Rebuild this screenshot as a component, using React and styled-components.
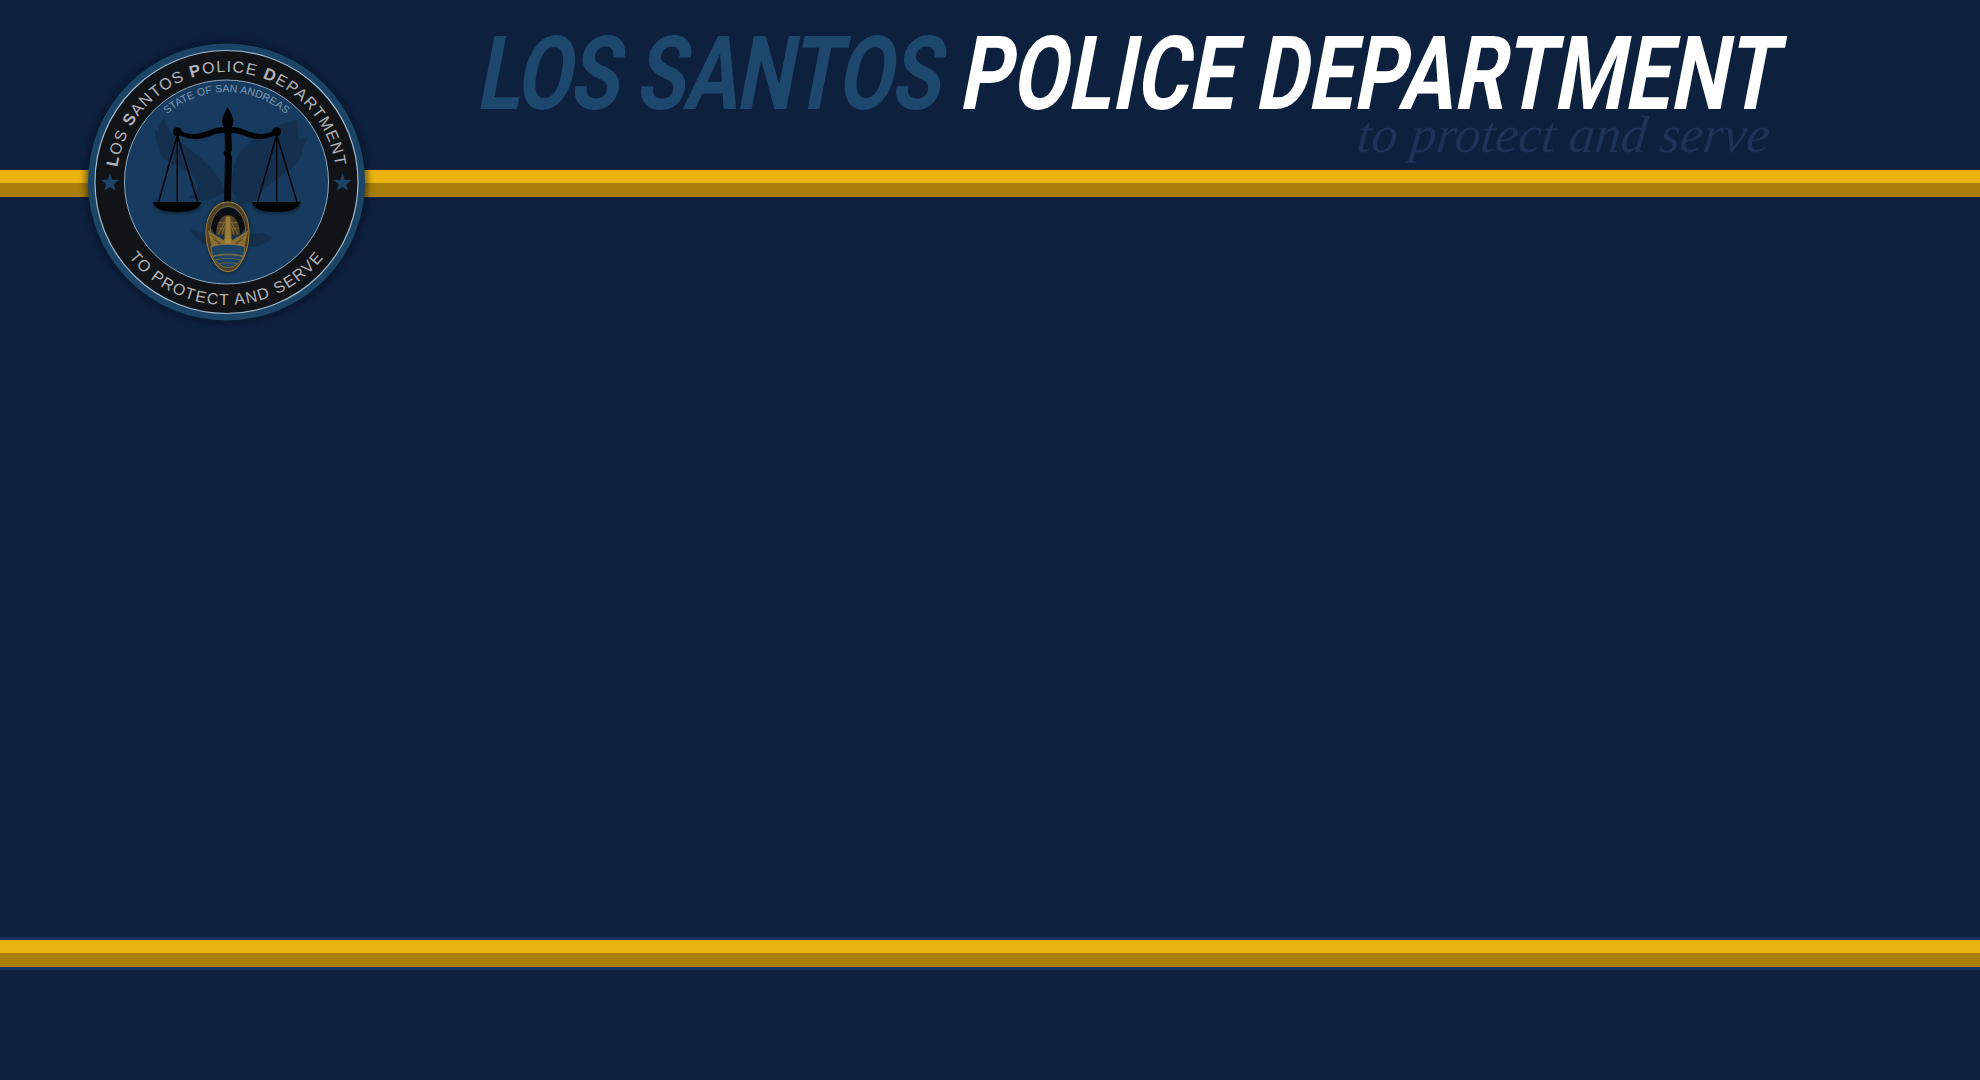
import React from "react";
import styled, { createGlobalStyle } from "styled-components";

const Global = createGlobalStyle`
  html, body { margin: 0; padding: 0; background: #0d203d; }
  body { overflow: hidden; }
`;
const Page = styled.div`
  position: relative; width: 1980px; height: 1080px; background: #0d203d; overflow: hidden;
  display: flex; flex-direction: column;
`;
const Masthead = styled.header`
  height: 170px; box-sizing: border-box; padding: 29px 0 0 482px;
`;
const Title = styled.h1`
  margin: 0; font: 700 102.6px/90px "Roboto", "Liberation Sans", sans-serif; white-space: nowrap;
  color: #fff; letter-spacing: 0.85px; transform-origin: 0 50%; transform: scaleX(0.781) skewX(-14deg); width: max-content;
`;
const Dim = styled.span` color: #1e476d; letter-spacing: -1.9px; `;
const Motto = styled.div`
  margin: -14px 210px 0 0; text-align: right; color: #1e3358;
  font: italic 400 52px/60px "Liberation Serif", serif; white-space: nowrap;
  transform: skewX(-6deg);
`;
const Band = styled.div`
  height: 14px; flex: none;
  background: #a87d08;
  border-top: 13px solid #ebb310;
  ${p => p.$edged ? "box-shadow: 0 0 0 3px #17315a;" : ""}
`;
const Body = styled.main` flex: none; height: 743px; `;
const Seal = styled.svg` position: absolute; left: 78px; top: 34px; `;

const star = (cx, cy, r) =>
  Array.from({ length: 10 }, (_, i) => {
    const a = -Math.PI / 2 + (i * Math.PI) / 5;
    const d = i % 2 ? r * 0.42 : r;
    return `${(cx + d * Math.cos(a)).toFixed(1)},${(cy + d * Math.sin(a)).toFixed(1)}`;
  }).join(" ");

const SealArt = () => (
  <Seal width="297" height="297" viewBox="78 34 297 297">
    <defs>
      <path id="topArc" d="M 116.500 182 a 110 110 0 1 1 220 0" />
      <path id="botArc" d="M 103.500 182 a 123 123 0 0 0 246 0" />
      <path id="stateArc" d="M 136.500 182 a 90 90 0 1 1 180 0" />
      <filter id="soft" x="-20%" y="-20%" width="140%" height="140%"><feGaussianBlur stdDeviation="3" /></filter>
      <filter id="thin" x="-20%" y="-20%" width="140%" height="140%"><feGaussianBlur stdDeviation="1.500" /></filter>
    </defs>
    <circle cx="226.500" cy="182" r="141" fill="#050d1c" opacity=".55" filter="url(#soft)" />
    <circle cx="226.500" cy="182" r="138.500" fill="#1b4467" />
    <circle cx="226.500" cy="182" r="131.500" fill="#121317" stroke="#9fb8cc" strokeWidth="1.200" />
    <circle cx="226.500" cy="182" r="102" fill="#173b5e" stroke="#8ea9c0" strokeWidth="1" />
    <text fontFamily="Liberation Sans, sans-serif" fontSize="16" fill="#b3b3b5" letterSpacing="1.250">
      <textPath href="#topArc" startOffset="50%" textAnchor="middle">
        <tspan fontWeight="700" fontSize="16.500">L</tspan>OS <tspan fontWeight="700" fontSize="16.500">S</tspan>ANTOS <tspan fontWeight="700" fontSize="16.500">P</tspan>OLICE <tspan fontWeight="700" fontSize="16.500">D</tspan>EPARTMENT
      </textPath>
    </text>
    <text fontFamily="Liberation Sans, sans-serif" fontSize="16" fill="#b3b3b5" letterSpacing="1.350">
      <textPath href="#botArc" startOffset="50%" textAnchor="middle">TO PROTECT AND SERVE</textPath>
    </text>
    <text fontFamily="Liberation Sans, sans-serif" fontSize="10.500" fill="#7f99b0" letterSpacing=".1">
      <textPath href="#stateArc" startOffset="50%" textAnchor="middle">STATE OF SAN ANDREAS</textPath>
    </text>
    <polygon points={star(110, 183, 9.500)} fill="#1b4467" />
    <polygon points={star(342.500, 183, 9.500)} fill="#1b4467" />

    {/* eagle */}
    <g fill="#14304e">
      <path d="M164 118C160 124 158 128 159 131L155 131C155 140 158 150 163 158C172 165 185 168 193 175C198 180 198 186 196 193L188 197L205 202L226 192C222 180 215 172 208 165C198 155 188 148 176 138C170 132 165 126 164 118Z" />
      <path d="M297 120L285 123C270 128 250 140 240 152C235 162 232 170 232 190L240 205L255 200C262 190 272 182 283 175C292 170 300 162 303 150L307 137L299 140Z" />
      <path d="M190 229L206 233L205 244C198 240 192 236 190 229Z" />
      <path d="M262 232L272 238C268 244 258 246 248 247L248 235Z" />
    </g>

    {/* scales */}
    <g fill="#020304" filter="url(#thin)" opacity=".35">
      <path d="M153 204h49c-2 8-10 10-25 10s-22-2-24-10zM252 204h49c-2 8-10 10-25 10s-22-2-24-10z" />
    </g>
    <g fill="#020304">
      <path d="M227.700 107C231 113 233.500 118 233.500 122C233.500 125 231 127 230 130H225.500C224.500 127 222 125 222 122C222 118 224.500 113 227.700 107Z" />
      <path d="M224.500 128H231L232 150L230.500 153L232 157L231 204H224L225 157L223.500 153L225 150Z" />
      <path d="M177 129C190 137 200 134 210 130C217 127 224 126 228 128C232 126 238 127 245 130C255 134 265 137 277 129L277 134C265 141 255 140 245 136C238 133 232 132 228 134C224 132 217 133 210 136C200 140 190 141 177 134Z" />
      <circle cx="177.300" cy="131.700" r="4.500" />
      <circle cx="276.700" cy="131.700" r="4.500" />
      <path d="M152.700 202H201.700C199.500 209 190 212 177 212S155 209 152.700 202Z" />
      <path d="M251.700 202H300.700C298.500 209 289 212 276 212S254 209 251.700 202Z" />
    </g>
    <path d="M177.300 135L158.300 203M177.300 135V203M177.300 135L198 203M276.700 135L257.300 203M276.700 135V203M276.700 135L297.300 203" stroke="#020304" strokeWidth="1.500" fill="none" />

    {/* badge */}
    <g transform="translate(0 202) scale(1 1.090) translate(0 -202)">
      <path d="M228 200C243 200 251 214 251 230C251 248 241 268 228 268S205 248 205 230C205 214 213 200 228 200Z" fill="#0a1520" opacity=".45" filter="url(#thin)" />
      <path d="M228 202C241 202 249 214 249 230C249 247 240 266 228 266S206 247 206 230C206 214 215 202 228 202Z" fill="#4d4028" stroke="#a07e3c" strokeWidth="1" />
      <path d="M228 206C238 206 245 216 245.500 230C245.500 246 237 262 228 262S210 246 210.500 230C211 216 218 206 228 206Z" fill="#17344f" stroke="#8f7238" strokeWidth=".8" />
      <path d="M211 226C212 215 219 207 228 207S244 215 245 226L240 232H216Z" fill="#0a0e12" />
      <path d="M216 232C216 222 221 214 228 214S240 222 240 232Z" fill="#4f4126" />
      <path d="M218 232L228 215M222 232L228 215M234 232L228 215M238 232L228 215M217 226H239M218.500 221H237.500" stroke="#a07e3c" strokeWidth=".6" fill="none" />
      <path d="M225.500 215H230.500L232 244H224Z" fill="#9a7a38" stroke="#4f4126" strokeWidth=".5" />
      <path d="M208 228L216 233L224 237V244L212 243ZM248 228L240 233L232 237V244L244 243Z" fill="#8f7033" />
      <path d="M213 236L222 242M243 236L234 242M211 232L220 240M245 232L236 240" stroke="#3d3320" strokeWidth=".7" />
      <rect x="224.500" y="236" width="7" height="8" fill="#a8853f" />
      <path d="M211 243C220 240 236 240 245 243L243.500 252C235 249 221 249 212.500 252Z" fill="#1b4467" stroke="#a07e3c" strokeWidth=".7" />
      <path d="M213 252C221 250 235 250 243 252C240 258 234 262 228 262S216 258 213 252Z" fill="#1b4467" stroke="#8f7238" strokeWidth=".8" />
      <path d="M216 255C223 253.500 233 253.500 240 255M219 258.500C224 257.500 232 257.500 237 258.500" stroke="#8f7238" strokeWidth=".6" fill="none" />
    </g>
  </Seal>
);

export default function App() {
  return (
    <Page>
      <Global />
      <Masthead>
        <Title><Dim>LOS SANTOS</Dim> POLICE DEPARTMENT</Title>
        <Motto>to protect and serve</Motto>
      </Masthead>
      <Band />
      <Body />
      <Band $edged />
      <SealArt />
    </Page>
  );
}
